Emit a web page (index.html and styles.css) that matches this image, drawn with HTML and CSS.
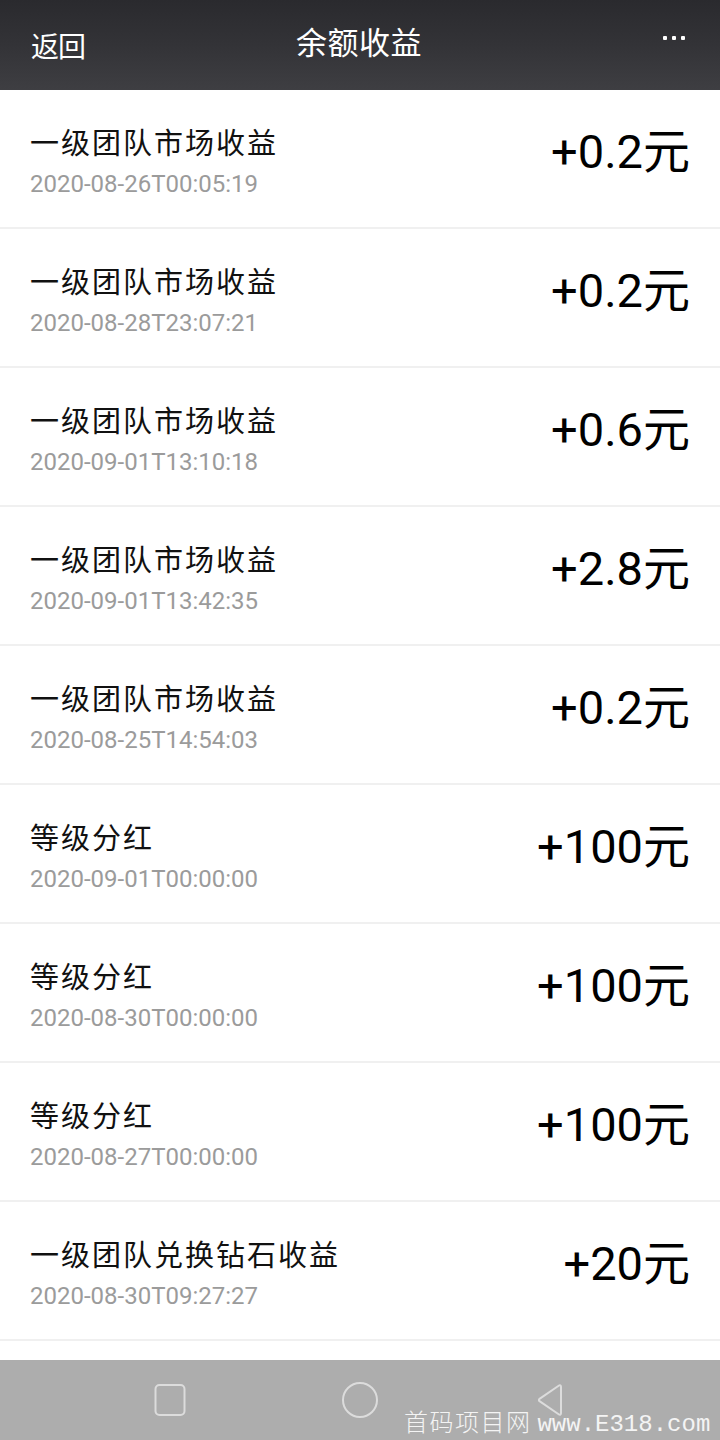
FILE: index.html
```html
<!DOCTYPE html>
<html lang="zh-CN">
<head>
<meta charset="utf-8">
<title>余额收益</title>
<link rel="stylesheet" href="styles.css">
</head>
<body>
<div class="screen">
  <header class="topbar">
    <span class="back">返回</span>
    <h1 class="title">余额收益</h1>
    <span class="more">
      <svg width="24" height="6" viewBox="0 0 24 6"><rect x="0" y="1" width="4" height="4" rx="1" fill="#fff"/><rect x="9" y="1" width="4" height="4" rx="1" fill="#fff"/><rect x="18" y="1" width="4" height="4" rx="1" fill="#fff"/></svg>
    </span>
  </header>

  <main class="list">
    <div class="row"><div class="info"><div class="name">一级团队市场收益</div><div class="time">2020-08-26T00:05:19</div></div><div class="amount">+0.2元</div></div>
    <div class="row"><div class="info"><div class="name">一级团队市场收益</div><div class="time">2020-08-28T23:07:21</div></div><div class="amount">+0.2元</div></div>
    <div class="row"><div class="info"><div class="name">一级团队市场收益</div><div class="time">2020-09-01T13:10:18</div></div><div class="amount">+0.6元</div></div>
    <div class="row"><div class="info"><div class="name">一级团队市场收益</div><div class="time">2020-09-01T13:42:35</div></div><div class="amount">+2.8元</div></div>
    <div class="row"><div class="info"><div class="name">一级团队市场收益</div><div class="time">2020-08-25T14:54:03</div></div><div class="amount">+0.2元</div></div>
    <div class="row"><div class="info"><div class="name">等级分红</div><div class="time">2020-09-01T00:00:00</div></div><div class="amount">+100元</div></div>
    <div class="row"><div class="info"><div class="name">等级分红</div><div class="time">2020-08-30T00:00:00</div></div><div class="amount">+100元</div></div>
    <div class="row"><div class="info"><div class="name">等级分红</div><div class="time">2020-08-27T00:00:00</div></div><div class="amount">+100元</div></div>
    <div class="row"><div class="info"><div class="name">一级团队兑换钻石收益</div><div class="time">2020-08-30T09:27:27</div></div><div class="amount">+20元</div></div>
  </main>

  <nav class="navbar">
    <svg class="nav-icon" width="40" height="40" viewBox="0 0 40 40"><rect x="5.5" y="5" width="29" height="30" rx="4" fill="none" stroke="#dcdcdc" stroke-width="2"/></svg>
    <svg class="nav-icon" width="40" height="40" viewBox="0 0 40 40"><circle cx="20" cy="20" r="17" fill="none" stroke="#dcdcdc" stroke-width="2"/></svg>
    <svg class="nav-icon" width="40" height="40" viewBox="0 0 40 40"><path d="M29 5.5 C30 4.8 31 5.5 31 6.8 L31 33.2 C31 34.5 30 35.2 29 34.5 L9.5 21.2 C8.7 20.6 8.7 19.4 9.5 18.8 Z" fill="none" stroke="#dcdcdc" stroke-width="2" stroke-linejoin="round"/></svg>
    <div class="watermark"><span class="wm-cn">首码项目网</span> <span class="wm-en">www.E318.com</span></div>
  </nav>
</div>
</body>
</html>
```

FILE: styles.css
```css
html, body {
  margin: 0;
  padding: 0;
  background: #ffffff;
}

.screen {
  width: 720px;
  height: 1440px;
  position: relative;
  overflow: hidden;
  background: #ffffff;
  font-family: Roboto, "Noto Sans CJK SC", sans-serif;
}

.topbar {
  height: 90px;
  box-sizing: border-box;
  display: grid;
  grid-template-columns: 1fr auto 1fr;
  align-items: start;
  padding: 0 33px 0 31px;
  background: linear-gradient(180deg, #2a2a2e 0%, #333337 50%, #3e3e42 100%);
  color: #ffffff;
}

.back {
  justify-self: start;
  font-family: "Noto Sans CJK SC", sans-serif;
  font-size: 28px;
  line-height: 40px;
  margin-top: 25px;
  letter-spacing: -1px;
}

.title {
  margin: 0;
  font-family: "Noto Sans CJK SC", sans-serif;
  font-weight: 400;
  font-size: 31px;
  line-height: 44px;
  margin-top: 19px;
  letter-spacing: 0.5px;
}

.more {
  justify-self: end;
  margin-top: 35px;
  line-height: 0;
}

.list {
  display: flex;
  flex-direction: column;
}

.row {
  height: 137px;
  border-bottom: 2px solid #f0f0f0;
  display: flex;
  justify-content: space-between;
  align-items: flex-start;
  padding: 0 30px;
}

.info {
  padding-top: 30px;
  display: flex;
  flex-direction: column;
  gap: 6px;
}

.name {
  font-family: "Noto Sans CJK SC", sans-serif;
  font-size: 29px;
  line-height: 42px;
  letter-spacing: 2px;
  color: #111111;
}

.time {
  font-family: Roboto, sans-serif;
  font-size: 24px;
  line-height: 32px;
  color: #9b9b9b;
}

.amount {
  padding-top: 34px;
  font-family: Roboto, "Noto Sans CJK SC", sans-serif;
  font-size: 47px;
  line-height: 56px;
  color: #000000;
}

.navbar {
  position: absolute;
  left: 0;
  right: 0;
  bottom: 0;
  height: 80px;
  background: #adadad;
  display: flex;
  justify-content: center;
  align-items: center;
  gap: 150px;
}

.watermark {
  position: absolute;
  left: 404px;
  top: 44px;
  white-space: nowrap;
  color: #f4f4f4;
  font-size: 24px;
  line-height: 34px;
  height: 34px;
}

.wm-cn {
  font-family: "Noto Sans CJK SC", sans-serif;
  font-weight: 300;
  letter-spacing: 1.5px;
}

.wm-en {
  font-family: "Liberation Mono", monospace;
  font-size: 24px;
}
```
